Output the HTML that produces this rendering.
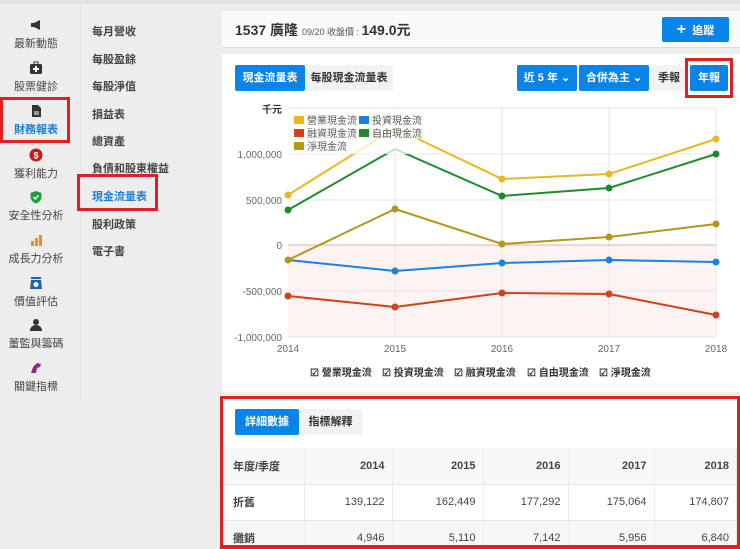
<!DOCTYPE html>
<html><head><meta charset="utf-8"><style>
*{box-sizing:border-box;margin:0;padding:0}
body{width:740px;height:549px;overflow:hidden;background:#ededed;font-family:"Liberation Sans","Noto Sans CJK TC",sans-serif;position:relative;color:#333}
.abs{position:absolute}
.nav{left:0;top:0;width:78px;height:400px}
.ni{position:absolute;left:0;width:72px;text-align:center;font-size:11px;color:#444}
.ni .ic{display:block;margin:0 auto 3px;width:14px;height:14px}
.sub{left:80px;top:0;width:1px;height:400px;background:#e4e4e4}
.si{position:absolute;left:92px;font-size:11px;font-weight:bold;color:#444}
.redbox{position:absolute;border:3px solid #e02020}
.btn{position:absolute;height:26px;line-height:26px;font-size:11px;font-weight:bold;text-align:center;color:#333;background:#f2f2f2;border-radius:2px}
.blue{background:#0a84e6;color:#fff}
table{border-collapse:collapse;font-size:11px;color:#444}
td{height:36px;border-right:1px solid #ececec;border-bottom:1px solid #e6e6e6;text-align:right;padding-right:7px}
td:first-child{text-align:left;padding-left:10px;font-weight:bold}
</style></head><body>
<div class="abs" style="left:0;top:0;width:740px;height:4px;background:#e2e2e2"></div>
<div class="abs nav">
 <div class="ni" style="top:18px"><svg class="ic" viewBox="0 0 14 14"><path d="M2 5h3l6-3v10L5 9H2z M5 9l1 4" fill="#333"/></svg>最新動態</div>
 <div class="ni" style="top:61px"><svg class="ic" viewBox="0 0 14 14"><rect x="1" y="3" width="12" height="10" rx="1.5" fill="#333"/><rect x="5" y="1" width="4" height="3" fill="none" stroke="#333"/><path d="M7 5v6M4 8h6" stroke="#fff" stroke-width="2"/></svg>股票健診</div>
 <div class="ni" style="top:104px;color:#1a7fd6;font-weight:bold"><svg class="ic" viewBox="0 0 14 14"><path d="M3 1h6l3 3v9H3z" fill="#333"/><path d="M5 8h5M5 10h5" stroke="#fff"/></svg>財務報表</div>
 <div class="ni" style="top:148px"><svg class="ic" viewBox="0 0 14 14"><circle cx="7" cy="7" r="6.5" fill="#c91a1a"/><text x="7" y="10.5" font-size="9" fill="#fff" text-anchor="middle" font-weight="bold">$</text></svg>獲利能力</div>
 <div class="ni" style="top:190px"><svg class="ic" viewBox="0 0 14 14"><path d="M7 1l5.5 2v4c0 3-2.5 5.5-5.5 6.5C4 12.5 1.5 10 1.5 7V3z" fill="#1f9e3a"/><path d="M4.5 7l2 2 3-3.5" stroke="#fff" fill="none" stroke-width="1.4"/></svg>安全性分析</div>
 <div class="ni" style="top:233px"><svg class="ic" viewBox="0 0 14 14"><rect x="2" y="8" width="3" height="5" fill="#f08a1c"/><rect x="6" y="5" width="3" height="8" fill="#f08a1c"/><rect x="10" y="2" width="3" height="11" fill="#f08a1c"/></svg>成長力分析</div>
 <div class="ni" style="top:276px"><svg class="ic" viewBox="0 0 14 14"><rect x="2" y="1" width="10" height="2" fill="#1f5fb8"/><path d="M2 4h10l1 9H1z" fill="#1f5fb8"/><circle cx="7" cy="8.5" r="2.5" fill="#fff"/></svg>價值評估</div>
 <div class="ni" style="top:318px"><svg class="ic" viewBox="0 0 14 14"><circle cx="7" cy="4" r="3" fill="#333"/><path d="M1 13c0-4 3-6 6-6s6 2 6 6z" fill="#333"/></svg>董監與籌碼</div>
 <div class="ni" style="top:361px"><svg class="ic" viewBox="0 0 14 14"><path d="M2 12l2-6 4-4 4 1-1 3-3 1-1 5z" fill="#8a2a8a"/></svg>關鍵指標</div>
</div>
<div class="redbox" style="left:0;top:97px;width:70px;height:46px"></div>
<div class="abs sub"></div>
<div class="si" style="top:23px">每月營收</div>
<div class="si" style="top:51px">每股盈餘</div>
<div class="si" style="top:78px">每股淨值</div>
<div class="si" style="top:106px">損益表</div>
<div class="si" style="top:133px">總資產</div>
<div class="si" style="top:160px">負債和股東權益</div>
<div class="si" style="top:188px;color:#1a7fd6">現金流量表</div>
<div class="si" style="top:216px">股利政策</div>
<div class="si" style="top:243px">電子書</div>
<div class="redbox" style="left:77px;top:174px;width:81px;height:37px"></div>

<div class="abs" style="left:222px;top:11px;width:518px;height:37px;background:#fafafa;border-bottom:1px solid #ddd"></div>
<div class="abs" style="left:235px;top:20px;font-size:14px;font-weight:bold;color:#333">1537 廣隆 <span style="font-size:9px;font-weight:normal;color:#555">09/20 收盤價 : </span><span style="font-size:14px">149.0元</span></div>
<div class="btn blue" style="left:662px;top:17px;width:67px;height:25px;line-height:25px"><b style="font-size:16px">+</b>&nbsp; 追蹤</div>

<div class="abs" style="left:222px;top:54px;width:518px;height:338px;background:#fff"></div>
<div class="btn blue" style="left:235px;top:65px;width:70px">現金流量表</div>
<div class="btn" style="left:305px;top:65px;width:88px">每股現金流量表</div>
<div class="btn blue" style="left:517px;top:65px;width:60px">近 5 年 ⌄</div>
<div class="btn blue" style="left:579px;top:65px;width:70px">合併為主 ⌄</div>
<div class="btn" style="left:651px;top:65px;width:36px">季報</div>
<div class="btn blue" style="left:690px;top:65px;width:38px">年報</div>
<div class="redbox" style="left:685px;top:58px;width:48px;height:40px"></div>

<svg class="abs" style="left:222px;top:100px" width="518" height="290" font-family="Liberation Sans,Noto Sans CJK TC,sans-serif">
 <rect x="66" y="145" width="428" height="92" fill="#fdf3f3"/>
 <g stroke="#e6e6e6"><path d="M66 8H494M66 54H494M66 100H494M66 191H494M66 237H494M173 8V237M280 8V237M387 8V237M494 8V237"/></g>
 <path d="M66 145H494" stroke="#d9b4b4"/>
 <g font-size="10" fill="#666" text-anchor="end"><text x="60" y="13" font-weight="bold" fill="#333">千元</text><text x="60" y="58">1,000,000</text><text x="60" y="104">500,000</text><text x="60" y="149">0</text><text x="60" y="195">-500,000</text><text x="60" y="241">-1,000,000</text></g>
 <g font-size="10" fill="#666" text-anchor="middle"><text x="66" y="252">2014</text><text x="173" y="252">2015</text><text x="280" y="252">2016</text><text x="387" y="252">2017</text><text x="494" y="252">2018</text></g>
 <g fill="none" stroke-width="2">
 <polyline stroke="#e8b81c" points="66,95 173,28 280,79 387,74 494,39"/>
 <polyline stroke="#1e8c2e" points="66,110 173,49 280,96 387,88 494,54"/>
 <polyline stroke="#b3961a" points="66,160 173,109 280,144 387,137 494,124"/>
 <polyline stroke="#1a82e0" points="66,160 173,171 280,163 387,160 494,162"/>
 <polyline stroke="#d2401e" points="66,196 173,207 280,193 387,194 494,215"/>
 </g>
 <g fill="#e8b81c"><circle cx="66" cy="95" r="3.5"/><circle cx="280" cy="79" r="3.5"/><circle cx="387" cy="74" r="3.5"/><circle cx="494" cy="39" r="3.5"/></g>
 <g fill="#1e8c2e"><circle cx="66" cy="110" r="3.5"/><circle cx="280" cy="96" r="3.5"/><circle cx="387" cy="88" r="3.5"/><circle cx="494" cy="54" r="3.5"/></g>
 <g fill="#b3961a"><circle cx="66" cy="160" r="3.5"/><circle cx="173" cy="109" r="3.5"/><circle cx="280" cy="144" r="3.5"/><circle cx="387" cy="137" r="3.5"/><circle cx="494" cy="124" r="3.5"/></g>
 <g fill="#1a82e0"><circle cx="173" cy="171" r="3.5"/><circle cx="280" cy="163" r="3.5"/><circle cx="387" cy="160" r="3.5"/><circle cx="494" cy="162" r="3.5"/></g>
 <g fill="#d2401e"><circle cx="66" cy="196" r="3.5"/><circle cx="173" cy="207" r="3.5"/><circle cx="280" cy="193" r="3.5"/><circle cx="387" cy="194" r="3.5"/><circle cx="494" cy="215" r="3.5"/></g>
 <rect x="68" y="10" width="128" height="44" fill="#fff" opacity="0.75"/>
 <g font-size="10" fill="#555">
 <rect x="72" y="16" width="10" height="8" fill="#e8b81c"/><text x="85" y="24">營業現金流</text>
 <rect x="137" y="16" width="10" height="8" fill="#1a82e0"/><text x="150" y="24">投資現金流</text>
 <rect x="72" y="29" width="10" height="8" fill="#d2401e"/><text x="85" y="37">融資現金流</text>
 <rect x="137" y="29" width="10" height="8" fill="#1e8c2e"/><text x="150" y="37">自由現金流</text>
 <rect x="72" y="42" width="10" height="8" fill="#b3961a"/><text x="85" y="50">淨現金流</text>
 </g>
 <g font-size="10" fill="#333" font-weight="bold">
 <text x="88" y="276">☑ 營業現金流</text><text x="160" y="276">☑ 投資現金流</text><text x="232" y="276">☑ 融資現金流</text><text x="305" y="276">☑ 自由現金流</text><text x="377" y="276">☑ 淨現金流</text>
 </g>
</svg>

<div class="abs" style="left:220px;top:396px;width:520px;height:153px;background:#fff"></div>
<div class="btn blue" style="left:235px;top:409px;width:64px">詳細數據</div>
<div class="btn" style="left:299px;top:409px;width:63px">指標解釋</div>
<div class="abs" style="left:223px;top:448px;width:514px;height:97px;overflow:hidden">
<table style="width:514px">
<tr style="background:#f6f7f8"><td style="width:81px">年度/季度</td><td style="width:88px;font-weight:bold">2014</td><td style="width:91px;font-weight:bold">2015</td><td style="width:85px;font-weight:bold">2016</td><td style="width:86px;font-weight:bold">2017</td><td style="font-weight:bold">2018</td></tr>
<tr><td>折舊</td><td>139,122</td><td>162,449</td><td>177,292</td><td>175,064</td><td>174,807</td></tr>
<tr style="background:#f6f7f8"><td>攤銷</td><td>4,946</td><td>5,110</td><td>7,142</td><td>5,956</td><td>6,840</td></tr>
</table></div>
<div class="abs" style="left:220px;top:396px;width:520px;height:153px;border:3px solid #e02020;border-bottom-width:4px"></div>
</body></html>
